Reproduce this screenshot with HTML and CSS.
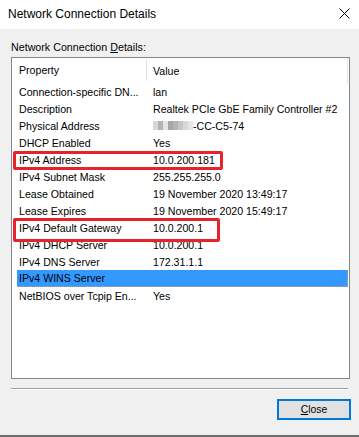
FILE: index.html
```html
<!DOCTYPE html>
<html lang="en">

<head>
    <meta charset="UTF-8">
    <title>Network Connection Details</title>
    <link rel="stylesheet" href="styles.css">
</head>

<body>
    <div class="window">
        <div class="titlebar">
            <span class="title">Network Connection Details</span>
            <svg class="close-x" width="11" height="11" viewBox="0 0 11 11">
                <path d="M0.5 0.5 L10.5 10.5 M10.5 0.5 L0.5 10.5" stroke="#000" stroke-width="1" fill="none" />
            </svg>
        </div>
        <div class="content">
            <p class="label">Network Connection <u>D</u>etails:</p>
            <div class="listbox">
                <div class="header">
                    <span class="col-prop">Property</span>
                    <span class="col-val">Value</span>
                </div>
                <div class="row"><span class="col-prop">Connection-specific DN...</span><span class="col-val">lan</span></div>
                <div class="row"><span class="col-prop">Description</span><span class="col-val">Realtek PCIe GbE Family Controller #2</span></div>
                <div class="row">
                    <span class="col-prop">Physical Address</span>
                    <span class="col-val">
                        <span class="blur">
                            <i class="b1"></i><i class="b2"></i><i class="b3"></i><i class="b4"></i><i class="b2"></i><i class="b5"></i><i class="b1"></i><i class="b3"></i>
                        </span>-CC-C5-74
                    </span>
                </div>
                <div class="row"><span class="col-prop">DHCP Enabled</span><span class="col-val">Yes</span></div>
                <div class="row"><span class="col-prop">IPv4 Address</span><span class="col-val">10.0.200.181</span></div>
                <div class="row"><span class="col-prop">IPv4 Subnet Mask</span><span class="col-val">255.255.255.0</span></div>
                <div class="row"><span class="col-prop">Lease Obtained</span><span class="col-val">19 November 2020 13:49:17</span></div>
                <div class="row"><span class="col-prop">Lease Expires</span><span class="col-val">19 November 2020 15:49:17</span></div>
                <div class="row"><span class="col-prop">IPv4 Default Gateway</span><span class="col-val">10.0.200.1</span></div>
                <div class="row"><span class="col-prop">IPv4 DHCP Server</span><span class="col-val">10.0.200.1</span></div>
                <div class="row"><span class="col-prop">IPv4 DNS Server</span><span class="col-val">172.31.1.1</span></div>
                <div class="row selected"><span class="col-prop">IPv4 WINS Server</span><span class="col-val"></span></div>
                <div class="row"><span class="col-prop">NetBIOS over Tcpip En...</span><span class="col-val">Yes</span></div>

                <div class="mark mark-ip"></div>
                <div class="mark mark-gw"></div>
            </div>
            <div class="separator"></div>
            <div class="buttons">
                <button class="btn"><u>C</u>lose</button>
            </div>
        </div>
    </div>
</body>

</html>
```
FILE: styles.css
```css
* {
    padding: 0;
    margin: 0;
    box-sizing: border-box;
}

body {
    font-family: "Liberation Sans", Arial, sans-serif;
    color: #000;
    background: #f0f0f0;
}

.window {
    width: 359px;
    height: 437px;
    background: #f0f0f0;
    border-bottom: 2px solid #6e6e6e;
}

.titlebar {
    height: 29px;
    background: #fff;
    display: flex;
    align-items: center;
    justify-content: space-between;
    padding: 0 9px 0 8px;
}

.title {
    font-size: 12px;
    margin-top: -2px;
}

.close-x {
    margin-top: -2px;
}

.content {
    padding: 11px 0 0 11px;
}

.label {
    font-size: 10.7px;
    line-height: 14px;
}

.label u,
.btn u {
    text-decoration-thickness: 1px;
    text-underline-offset: 1px;
}

.listbox {
    position: relative;
    margin-top: 3px;
    width: 339px;
    height: 322px;
    background: #fff;
    border: 1px solid #828790;
    font-size: 10.6px;
}

.header {
    display: flex;
    height: 25px;
    align-items: center;
}

.header .col-prop {
    border-right: 1px solid #e5e5e5;
    align-self: stretch;
    display: flex;
    align-items: center;
    margin: 1px 0 2px;
}

.header .col-val {
    border-right: 1px solid #e5e5e5;
    align-self: stretch;
    display: flex;
    align-items: center;
    margin: 0 0 -1px;
}

.row {
    display: flex;
    height: 17px;
    align-items: center;
}

.col-prop {
    width: 135px;
    padding-left: 7px;
    white-space: nowrap;
}

.col-val {
    width: 201px;
    padding-left: 6px;
    white-space: nowrap;
    display: flex;
    align-items: center;
}

.selected {
    background: #3399ff;
    margin-left: 5px;
    margin-right: 1px;
    border-bottom: 1px dotted #c8a070;
    border-right: 1px dotted #c8a070;
}

.selected .col-prop {
    width: 130px;
    padding-left: 2px;
}

.blur {
    display: inline-flex;
    height: 9px;
    margin-right: 0;
}

.blur i {
    display: block;
    width: 5px;
    height: 9px;
}

.b1 { background: #d8d8d8; }
.b2 { background: #b4b4b4; }
.b3 { background: #e6e6e6; }
.b4 { background: #a6a6a6; }
.b5 { background: #c6c6c6; }

.mark {
    position: absolute;
    border: 3px solid #e8222a;
    border-radius: 2px;
}

.mark-ip {
    left: 1px;
    top: 93px;
    width: 210px;
    height: 19px;
}

.mark-gw {
    left: 1px;
    top: 160px;
    width: 207px;
    height: 24px;
}

.separator {
    margin-top: 9px;
    width: 337px;
    height: 2px;
    border-top: 1px solid #a0a0a0;
    border-bottom: 1px solid #fff;
}

.buttons {
    display: flex;
    justify-content: flex-end;
    padding-right: 8px;
    margin-top: 9px;
}

.btn {
    width: 74px;
    height: 21px;
    background: #e1e1e1;
    border: 2px solid #0078d7;
    font-family: "Liberation Sans", Arial, sans-serif;
    font-size: 10.4px;
    color: #000;
}
```
